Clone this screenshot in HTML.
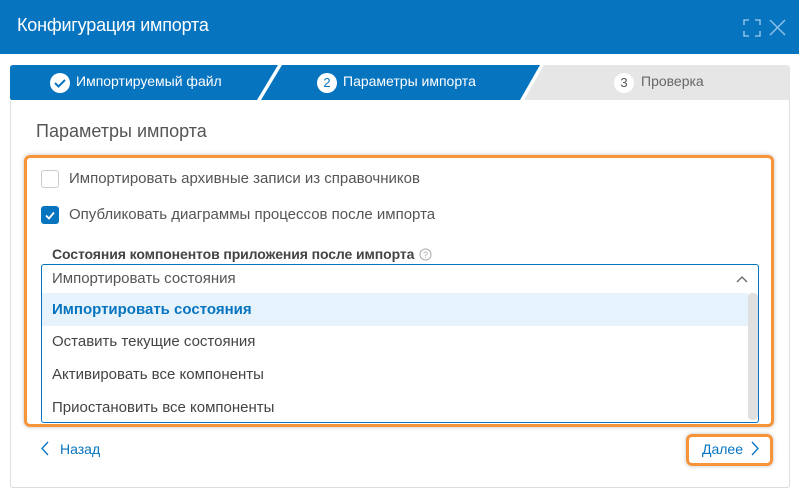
<!DOCTYPE html>
<html><head><meta charset="utf-8"><style>
*{margin:0;padding:0;box-sizing:border-box}
body{width:799px;height:503px;background:#fff;font-family:"Liberation Sans",sans-serif;position:relative;overflow:hidden;color:#333}
.hdr{position:absolute;left:0;top:0;width:799px;height:54px;background:#0774bf}
.hdr .t{position:absolute;left:17px;top:15px;color:#fff;font-size:18px;letter-spacing:-0.2px}
.panel{position:absolute;left:10px;top:99px;width:780px;height:389px;border:1px solid #ddd;border-top:none;border-radius:0 0 3px 3px}
.abs{position:absolute;white-space:nowrap}
.orange{position:absolute;left:24px;top:155px;width:750px;height:272px;border:3px solid #f7943a;border-radius:6px;box-shadow:0 0 4px rgba(0,0,0,.25)}
.cb{position:absolute;width:18px;height:18px;border:1px solid #ccc;border-radius:3px;background:#fff}
.dd{position:absolute;left:41px;top:264px;width:718px;height:159px;border:1px solid #0774bf;border-radius:3px;background:#fff;overflow:hidden}
.opt{position:absolute;left:0;width:706px;height:33px;font-size:15px;padding:7px 0 0 10px;color:#444}
.btn{position:absolute;left:686px;top:434px;width:87px;height:32px;border:3px solid #f7943a;border-radius:6px;box-shadow:0 0 4px rgba(0,0,0,.25)}
</style></head><body>
<div class="hdr"><div class="t">Конфигурация импорта</div>
<svg class="abs" style="left:743px;top:19px" width="18" height="18" viewBox="0 0 18 18" fill="none" stroke="#8cc0e6" stroke-width="1.5"><path d="M1 6V1h5M12 1h5v5M17 12v5h-5M6 17H1v-5"/></svg>
<svg class="abs" style="left:769px;top:19px" width="17" height="17" viewBox="0 0 17 17" fill="none" stroke="#8cc0e6" stroke-width="1.5"><path d="M1 1L16 16M16 1L1 16"/></svg>
</div>
<svg class="abs" style="left:0;top:65px" width="799" height="36">
<path d="M13 0H278L257 35H10V3Q10 0 13 0Z" fill="#0774bf"/>
<path d="M282 0H540L520 35H261Z" fill="#0774bf"/>
<path d="M544 0H787Q790 0 790 3V35H524Z" fill="#e6e6e6"/>
</svg>
<svg class="abs" style="left:49px;top:72px" width="22" height="22"><circle cx="11" cy="11" r="10" fill="#fff"/><path d="M6 11l3.5 3.5L16 8" stroke="#0774bf" stroke-width="2" fill="none"/></svg>
<div class="abs" style="left:76px;top:73px;color:#fff;font-size:14px">Импортируемый файл</div>
<div class="abs" style="left:317px;top:73px;width:20px;height:20px;border-radius:50%;background:#fff;color:#0774bf;font-size:13px;text-align:center;line-height:20px">2</div>
<div class="abs" style="left:343px;top:73px;color:#fff;font-size:14px">Параметры импорта</div>
<div class="abs" style="left:614px;top:73px;width:20px;height:20px;border-radius:50%;background:#fff;color:#555;font-size:13px;text-align:center;line-height:20px">3</div>
<div class="abs" style="left:641px;top:73px;color:#666;font-size:14px">Проверка</div>
<div class="panel"></div>
<div class="abs" style="left:36px;top:121px;font-size:18px;color:#555">Параметры импорта</div>
<div class="orange"></div>
<div class="cb" style="left:41px;top:170px"></div>
<div class="abs" style="left:69px;top:170px;font-size:15px;color:#555">Импортировать архивные записи из справочников</div>
<div class="cb" style="left:41px;top:206px;background:#0774bf;border-color:#0774bf"><svg width="16" height="16" style="position:absolute;left:0;top:0"><path d="M4 8.5l3 3 5-6" stroke="#fff" stroke-width="1.8" fill="none"/></svg></div>
<div class="abs" style="left:69px;top:206px;font-size:15px;color:#555">Опубликовать диаграммы процессов после импорта</div>
<div class="abs" style="left:52px;top:246px;font-size:14px;font-weight:bold;color:#444;letter-spacing:-0.1px">Состояния компонентов приложения после импорта</div>
<svg class="abs" style="left:419px;top:248px" width="13" height="13"><circle cx="6.5" cy="6.5" r="5.5" stroke="#aaa" fill="none"/><text x="6.5" y="10" font-size="9" fill="#aaa" text-anchor="middle" font-family="Liberation Sans">?</text></svg>
<div class="dd">
<div class="opt" style="top:0;height:28px;padding-top:5px;color:#555">Импортировать состояния</div>
<svg class="abs" style="left:694px;top:10px" width="12" height="8"><path d="M1 7l5-5 5 5" stroke="#666" stroke-width="1.3" fill="none"/></svg>
<div class="opt" style="top:28px;background:#e6f3fc;color:#0774bf;font-weight:bold;padding-top:8px">Импортировать состояния</div>
<div class="opt" style="top:61px">Оставить текущие состояния</div>
<div class="opt" style="top:94px">Активировать все компоненты</div>
<div class="opt" style="top:127px">Приостановить все компоненты</div>
<div class="abs" style="left:706px;top:28px;width:10px;height:127px;background:#e0e0e0;border-radius:4px"></div>
</div>
<svg class="abs" style="left:41px;top:441px" width="8" height="15"><path d="M7 1L1 7.5 7 14" stroke="#0774bf" stroke-width="1.3" fill="none"/></svg>
<div class="abs" style="left:60px;top:441px;font-size:14px;color:#0774bf">Назад</div>
<div class="btn"></div>
<div class="abs" style="left:702px;top:441px;font-size:14px;color:#0774bf">Далее</div>
<svg class="abs" style="left:751px;top:441px" width="8" height="15"><path d="M1 1l6 6.5L1 14" stroke="#0774bf" stroke-width="1.3" fill="none"/></svg>
</body></html>
